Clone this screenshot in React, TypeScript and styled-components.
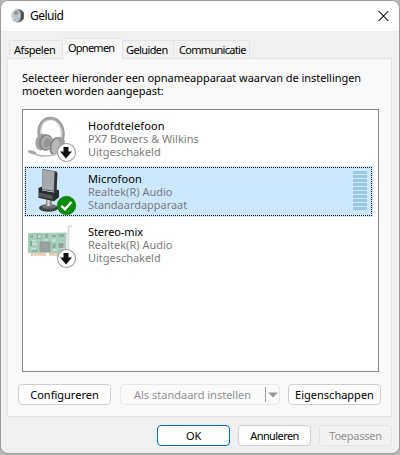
import React from 'react';
import styled, { createGlobalStyle } from 'styled-components';

const GlobalStyle = createGlobalStyle`
  * {
    box-sizing: border-box;
  }

  body {
    margin: 0;
    background: #b5b5b5;
    font-family: 'Noto Sans', 'Open Sans', sans-serif;
    font-size: 11px;
    color: #000;
  }
`;

const Window = styled.div`
  width: 400px;
  height: 454px;
  display: flex;
  flex-direction: column;
  border: 1px solid #9a9a9a;
  border-radius: 8px;
  background: #f0f0f0;
  overflow: hidden;
`;

const TitleBar = styled.header`
  height: 30px;
  flex-shrink: 0;
  display: flex;
  align-items: center;
  padding: 0 10px;
  background: #fff;
`;

const Title = styled.h1`
  flex: 1;
  margin: 0 0 0 6px;
  font-size: 12px;
  font-weight: 400;
  line-height: 16px;
  letter-spacing: -0.5px;
`;

const CloseButton = styled.button`
  display: flex;
  padding: 0;
  border: 0;
  background: none;
`;

const TabList = styled.nav`
  height: 27px;
  flex-shrink: 0;
  display: flex;
  align-items: flex-end;
  padding-left: 8px;
`;

const Tab = styled.button<{
  $width: number;
  $indent: number;
  $spacing: number;
  $active?: boolean;
}>`
  width: ${({ $width }) => $width}px;
  height: ${({ $active }) => ($active ? 21 : 18)}px;
  margin-bottom: ${({ $active }) => ($active ? -1 : 0)}px;
  padding: 0 0 ${({ $active }) => ($active ? 3 : 0)}px ${({ $indent }) => $indent}px;
  display: flex;
  align-items: center;
  justify-content: flex-start;
  border: 1px solid #e3e3e3;
  border-bottom: 0;
  border-left-width: ${({ $active }) => ($active ? 1 : 0)}px;
  background: ${({ $active }) => ($active ? '#f9f9f9' : '#f2f2f2')};
  color: #000;
  font: inherit;
  letter-spacing: ${({ $spacing }) => $spacing}px;
  white-space: nowrap;
  z-index: ${({ $active }) => ($active ? 1 : 0)};

  &:first-child {
    border-left-width: 1px;
    border-right-width: 0;
  }
`;

const Panel = styled.main`
  height: 359px;
  flex-shrink: 0;
  margin: 0 7px 0 6px;
  padding: 12px 9px 0 10px;
  border: 1px solid #e3e3e3;
  background: #f9f9f9;
`;

const Description = styled.p`
  height: 38px;
  margin: 0 0 0 4px;
  line-height: 13px;
  white-space: nowrap;
`;

const Line = styled.span<{ $spacing: number }>`
  display: block;
  letter-spacing: ${({ $spacing }) => $spacing}px;
`;

const DeviceList = styled.ul`
  width: 357px;
  height: 263px;
  margin: 0 0 12px 4px;
  padding: 3px 5px 0 1px;
  display: flex;
  flex-direction: column;
  gap: 2px;
  border: 1px solid #828790;
  background: #fff;
  list-style: none;
`;

const Device = styled.li<{ $selected?: boolean }>`
  width: 349px;
  height: 51px;
  display: flex;
  padding: 1px;
  border-radius: 1px;
  background: ${({ $selected }) => ($selected ? '#cce8ff' : 'transparent')};
`;

const DeviceFocus = styled.div<{ $selected?: boolean }>`
  width: 347px;
  height: 49px;
  display: flex;
  padding: ${({ $selected }) => ($selected ? '3px 4px 0 3px' : '4px 5px 0 4px')};
  border: ${({ $selected }) => ($selected ? '1px dotted #1a1005' : '0')};
`;

const DeviceIcon = styled.div`
  width: 50px;
  height: 48px;
  margin: -4px 9px 0 0;
  flex-shrink: 0;

  svg {
    display: block;
    overflow: visible;
  }
`;

const DeviceText = styled.div`
  flex: 1;
  padding-top: 1px;
  line-height: 13px;
  white-space: nowrap;
  color: #7c7c7c;

  > :first-child {
    color: #000;
  }
`;

const Meter = styled.div`
  width: 14px;
  display: flex;
  flex-direction: column;
  gap: 1px;
`;

const MeterBar = styled.span`
  height: 3px;
  background: #99cae1;
`;

const PanelActions = styled.div`
  display: flex;
`;

const Button = styled.button<{
  $width: number;
  $spacing: number;
  $primary?: boolean;
}>`
  width: ${({ $width }) => $width}px;
  height: 21px;
  display: flex;
  align-items: center;
  justify-content: center;
  padding: 0;
  border: 1px solid ${({ $primary }) => ($primary ? '#0067c0' : '#cfcfcf')};
  border-radius: 4px;
  background: #fdfdfd;
  color: #000;
  font: inherit;
  letter-spacing: ${({ $spacing }) => $spacing}px;
  white-space: nowrap;

  &:disabled {
    border-color: #e4e4e4;
    background: #f3f3f3;
    color: #929292;
  }
`;

const SplitButton = styled.div`
  width: 160px;
  height: 21px;
  margin: 0 8px 0 9px;
  display: flex;
  align-items: center;
  border: 1px solid #e8e8e8;
  border-radius: 4px;
  background: #fafafa;
  color: #929292;
`;

const SplitLabel = styled.span`
  width: 144px;
  padding-left: 13px;
  letter-spacing: 0;
  white-space: nowrap;
`;

const SplitArrow = styled.span`
  width: 14px;
  height: 15px;
  display: flex;
  align-items: center;
  justify-content: center;
  border-left: 1px solid #a0a0a0;
`;

const Footer = styled.footer`
  display: flex;
  justify-content: flex-end;
  gap: 8px;
  padding: 8px 7px 0 0;
`;

const DisabledBadge = () => (
  <g>
    <circle cx="37.5" cy="38.5" r="9" fill="#fff" stroke="#9a9a9a" strokeWidth="1.1" />
    <path d="M34.500 33h5v4.500h3.500L37 44.500l-6-7h3.500z" fill="#111" />
  </g>
);

const HeadphonesIcon = () => (
  <svg width="50" height="50" viewBox="0 0 50 50">
    <path d="M11 24C8 15 12 4.500 21 4.300c10 0 15 10 12.500 22" fill="none" stroke="#a6a6a6" strokeWidth="2.800" />
    <path d="M12.700 22C10.500 15 14.500 6.500 21.500 6c7 0 12 8 10 19" fill="none" stroke="#cfcfcf" strokeWidth=".8" />
    <path d="M9.800 23C7 15 11 3.500 21 3.100c10.500 0 16 10 13.700 22" fill="none" stroke="#858585" strokeWidth=".6" />
    <ellipse cx="12.500" cy="28" rx="6" ry="8.500" fill="#a3a3a3" transform="rotate(12 12.500 28)" />
    <ellipse cx="17" cy="28.500" rx="7" ry="8.300" fill="#8a8a8a" transform="rotate(14 17 28.500)" />
    <ellipse cx="17.500" cy="28.500" rx="5.200" ry="6.800" fill="#b0b0b0" transform="rotate(14 17.500 28.500)" />
    <ellipse cx="18" cy="29" rx="3.500" ry="5" fill="#969696" transform="rotate(14 18 29)" />
    <path d="M25 24c5-2.500 11-1 11 5l-3 9-8 3c-4-4-4-13 0-17z" fill="#a0a0a0" />
    <ellipse cx="25" cy="32.500" rx="4.300" ry="8.500" fill="#858585" transform="rotate(10 25 32.500)" />
    <ellipse cx="26.500" cy="32.500" rx="3.800" ry="7.500" fill="#b8b8b8" transform="rotate(10 26.500 32.500)" />
    <path d="M3 38.500c6 4 13 4.800 23 2" fill="none" stroke="#b8b8b8" strokeWidth="1.600" />
    <ellipse cx="3" cy="38.200" rx="4.300" ry="1.600" fill="#a6a6a6" transform="rotate(14 3 38.200)" />
    <DisabledBadge />
  </svg>
);

const MicrophoneIcon = () => (
  <svg width="50" height="50" viewBox="0 0 50 50">
    <ellipse cx="19.500" cy="41" rx="9.500" ry="3.800" fill="#3f4041" />
    <ellipse cx="20" cy="39.500" rx="7" ry="2.300" fill="#6f7071" />
    <path d="M17 31h6v8h-6z" fill="#8d8f90" />
    <path d="M18.500 32h2v7h-2z" fill="#d9dbdc" />
    <path d="M13.500 2L28 4.500 27 25l-14-2z" fill="#5d5f61" />
    <path d="M25.500 4.500l3 1.500-1 19-2.500 1z" fill="#323436" />
    <path d="M14 2.800l11.500 2-.8 18.700L13 22z" fill="#a9abac" />
    <path
      d="M15 6l9.500 1M15 9l9.500 1M14.500 12l9.500 1M14.500 15l9.500.8M14 18l10 .8"
      stroke="#96989a"
      strokeWidth=".7"
      strokeDasharray="1 1"
    />
    <path d="M9.500 21l3.500-1.500v4l12 2 3-3 2 .7v7l-5 4-15.500-3.500z" fill="#292b2d" />
    <path d="M10 25.500l13.500 2.700v4.300L10 29.500z" fill="#55575a" />
    <circle cx="37.500" cy="38.500" r="9.300" fill="#098b0c" stroke="#087308" strokeWidth=".6" />
    <path d="M32.300 38.800l3.600 3.500 6.600-7.300" fill="none" stroke="#fff" strokeWidth="2.400" />
  </svg>
);

const SoundCardIcon = () => (
  <svg width="50" height="50" viewBox="0 0 50 50">
    <path d="M-1 13l39-.5V33H-1z" fill="#a6ceba" />
    <path d="M2 33h15v2.800H2zM20 33h13v2.800H20z" fill="#e2c5a4" />
    <path d="M5 33v3M8 33v3M11 33v3M14 33v3M23 33v3M26 33v3M29 33v3" stroke="#f9eddf" strokeWidth=".7" />
    <path d="M43 6.500h-3.500V34" fill="none" stroke="#d4d4d4" strokeWidth="1.500" />
    <path d="M37 14h2.500v17H37z" fill="#e6e6e6" />
    <path d="M1 15h3v3H1zM8 14h5v5H8zM16 14h3v4h-3zM23 15h4v2h-4zM30 14h5v3h-5z" fill="#84b59e" />
    <path d="M9 15h3v3H9zM24 19h3v2h-3z" fill="#c7ddd2" />
    <path d="M3 21h4M3 24h5M2 29h5M23 21h3M24 30h4M15 20h4" stroke="#cfe4d9" strokeWidth="1.300" />
    <path d="M1 21h2v5H1zM3 30h6v1.500H3zM23.500 24h3v4h-3z" fill="#7eae97" />
    <rect x="11" y="22" width="10" height="9.500" fill="#9ba3a0" stroke="#818c87" strokeDasharray="1 .7" />
    <rect x="29" y="22.500" width="6" height="6" fill="#95a09b" stroke="#bcd2c7" />
    <DisabledBadge />
  </svg>
);

const SpeakerIcon = () => (
  <svg width="13" height="14" viewBox="0 0 13 14">
    <path d="M4 .8L9.500.6l3.300 2.900v6L9.500 13l-4 .5z" fill="#45484a" />
    <path d="M5.500.8h3.200L10.500 4l-1 8-3.500 1.500z" fill="#8b8f91" />
    <ellipse cx="4.700" cy="7" rx="4.500" ry="6.200" fill="#c9cdcf" />
    <ellipse cx="4.800" cy="4" rx="2.400" ry="2.300" fill="#90989c" />
    <ellipse cx="5.200" cy="9" rx="2.800" ry="3.200" fill="#b3c1ca" />
    <path d="M1 5l2-3M1.500 10l2-2" stroke="#e9ebec" strokeWidth="1" />
  </svg>
);

const devices = [
  {
    name: 'Hoofdtelefoon',
    driver: 'PX7 Bowers & Wilkins',
    status: 'Uitgeschakeld',
    spacing: [0.12, 0, -0.03],
    Icon: HeadphonesIcon,
  },
  {
    name: 'Microfoon',
    driver: 'Realtek(R) Audio',
    status: 'Standaardapparaat',
    spacing: [0.1, 0, -0.03],
    selected: true,
    Icon: MicrophoneIcon,
  },
  {
    name: 'Stereo-mix',
    driver: 'Realtek(R) Audio',
    status: 'Uitgeschakeld',
    spacing: [-0.1, 0, -0.03],
    Icon: SoundCardIcon,
  },
];

const App = () => {
  return (
    <>
      <GlobalStyle />
      <Window>
        <TitleBar>
          <SpeakerIcon />
          <Title>Geluid</Title>
          <CloseButton aria-label="Sluiten">
            <svg width="11" height="11" viewBox="0 0 11 11">
              <path d="M.7.2l9.600 9.600M10.300.2L.7 9.800" stroke="#111" strokeWidth="1.100" />
            </svg>
          </CloseButton>
        </TitleBar>
        <TabList>
          <Tab $width={53} $indent={4} $spacing={-0.45}>Afspelen</Tab>
          <Tab $width={61} $indent={5} $spacing={-0.75} $active>Opnemen</Tab>
          <Tab $width={51} $indent={3} $spacing={-0.6}>Geluiden</Tab>
          <Tab $width={76} $indent={5} $spacing={-0.7}>Communicatie</Tab>
        </TabList>
        <Panel>
          <Description>
            <Line $spacing={-0.04}>Selecteer hieronder een opnameapparaat waarvan de instellingen</Line>
            <Line $spacing={-0.03}>moeten worden aangepast:</Line>
          </Description>
          <DeviceList>
            {devices.map(({ name, driver, status, spacing, selected, Icon }) => (
              <Device key={name} $selected={selected}>
                <DeviceFocus $selected={selected}>
                  <DeviceIcon>
                    <Icon />
                  </DeviceIcon>
                  <DeviceText>
                    <Line $spacing={spacing[0]}>{name}</Line>
                    <Line $spacing={spacing[1]}>{driver}</Line>
                    <Line $spacing={spacing[2]}>{status}</Line>
                  </DeviceText>
                  {selected && (
                    <Meter>
                      {[...Array(10)].map((value, index) => (
                        <MeterBar key={index} />
                      ))}
                    </Meter>
                  )}
                </DeviceFocus>
              </Device>
            ))}
          </DeviceList>
          <PanelActions>
            <Button $width={93} $spacing={0}>Configureren</Button>
            <SplitButton>
              <SplitLabel>Als standaard instellen</SplitLabel>
              <SplitArrow>
                <svg width="10" height="6" viewBox="0 0 10 6">
                  <path d="M0 .5h10L5 5.500z" fill="#999" />
                </svg>
              </SplitArrow>
            </SplitButton>
            <Button $width={93} $spacing={0}>Eigenschappen</Button>
          </PanelActions>
        </Panel>
        <Footer>
          <Button $width={73} $spacing={-0.25} $primary>OK</Button>
          <Button $width={73} $spacing={-0.6}>Annuleren</Button>
          <Button $width={73} $spacing={-0.25} disabled>Toepassen</Button>
        </Footer>
      </Window>
    </>
  );
};

export default App;
